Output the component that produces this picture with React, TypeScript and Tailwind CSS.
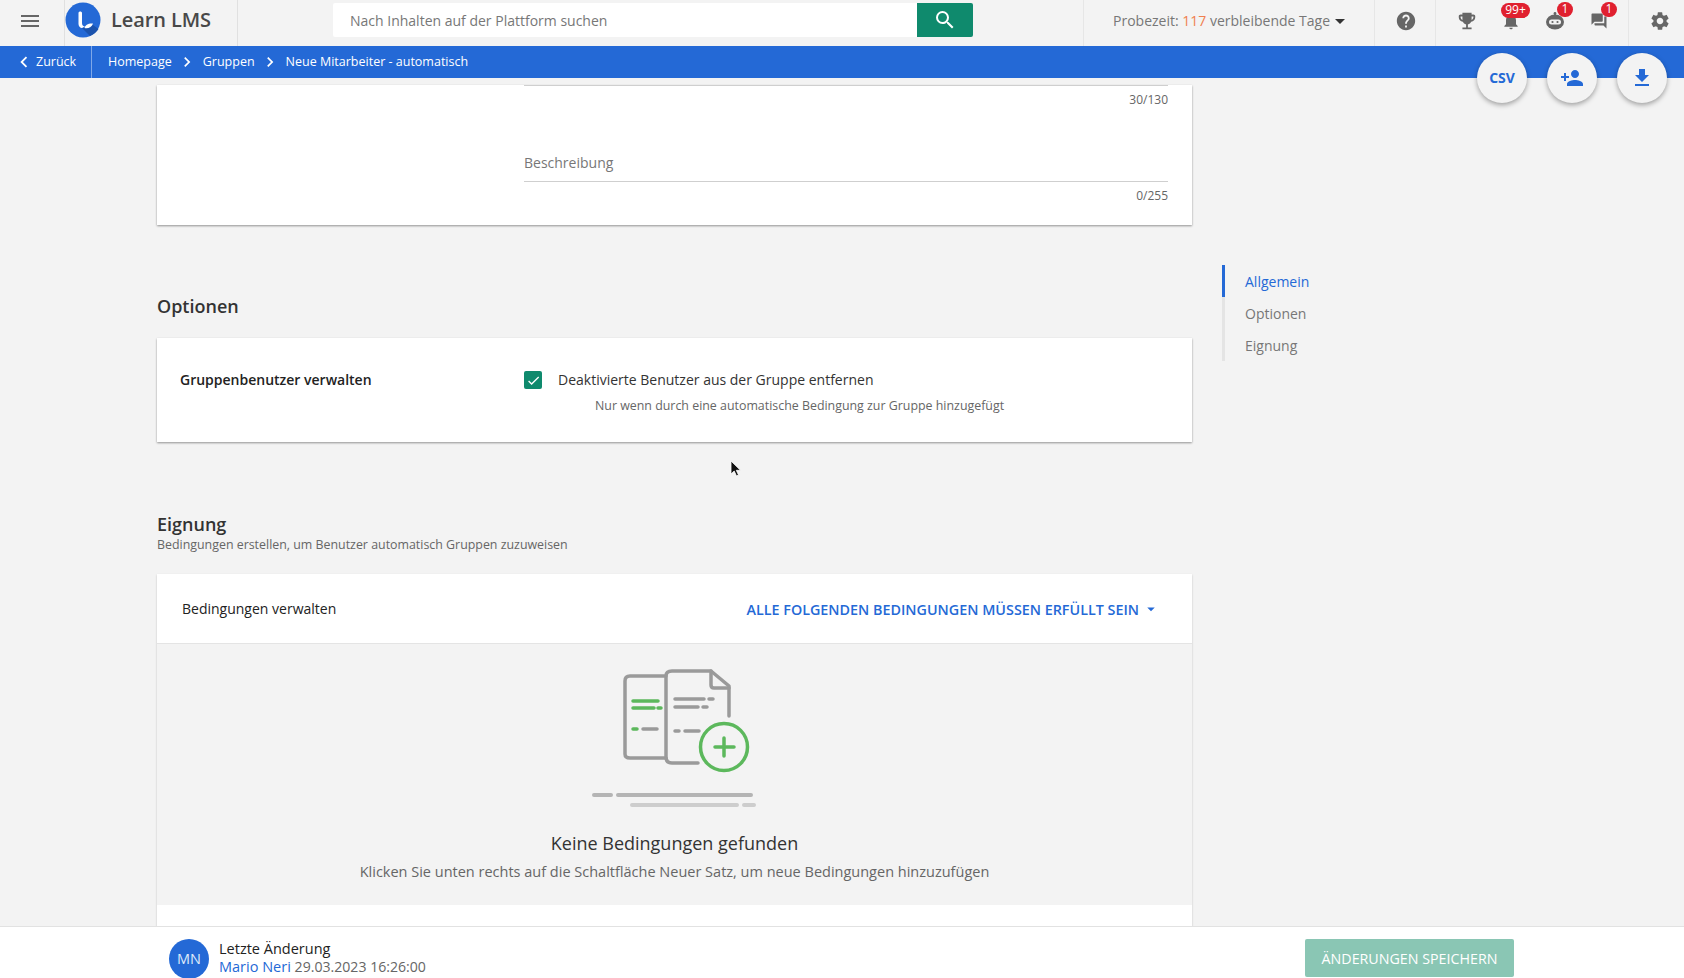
import { MdMenu, MdSearch, MdHelp, MdEmojiEvents, MdNotifications, MdQuestionAnswer, MdSettings, MdPersonAdd, MdFileDownload, MdChevronRight, MdChevronLeft, MdArrowDropDown, MdCheck } from "react-icons/md";

function Logo() {
  return (
    <svg width="36" height="36" viewBox="0 0 36 36" className="shrink-0">
      <circle cx="18" cy="18" r="17.5" fill="#2469d6" />
      <path d="M17 26 L28 23 L33.5 27 A17.5 17.5 0 0 1 25 34 Z" fill="#1b53ad" />
      <path d="M13.5 11 C13.5 9 17 9 17 11 V21 C17 23 18 24.5 20 24.5 L17 26 C15 26 13.5 24 13.5 22 Z" fill="#fff" />
      <path d="M19.5 26 C20 23 23.5 21 28 21.5 C27 25 23 27 19.5 26 Z" fill="#fff" />
    </svg>
  );
}

function RobotIcon() {
  return (
    <svg width="22" height="22" viewBox="0 0 22 22">
      <circle cx="11" cy="3.5" r="1.4" fill="#666" />
      <path d="M11 3.5v4" stroke="#666" strokeWidth="1.5" />
      <ellipse cx="11" cy="12" rx="9" ry="7.5" fill="#666" />
      <rect x="5" y="9.5" width="12" height="5" rx="2.5" fill="#f3f3f3" />
      <circle cx="8.5" cy="12" r="1.1" fill="#666" />
      <circle cx="13.5" cy="12" r="1.1" fill="#666" />
    </svg>
  );
}

function Badge({ children, className }: { children: string; className: string }) {
  return (
    <span className={`absolute -top-[8px] flex h-[15px] items-center justify-center rounded-full bg-[#e0202f] text-[12px] font-medium text-white ${className}`}>
      {children}
    </span>
  );
}

function EmptyIllustration() {
  return (
    <svg width="240" height="170" viewBox="0 0 240 170" fill="none" strokeLinecap="round" strokeLinejoin="round" className="ml-[11px] shrink-0">
      <path d="M106 25 H70 Q65 25 65 30 V103 Q65 107 70 107 H106" stroke="#9a9a9a" strokeWidth="3.5" />
      <path d="M138 112 H112 Q106 112 106 106 V25 Q106 20 112 20 H151 L169 35 V65" stroke="#9a9a9a" strokeWidth="3.5" />
      <path d="M151 20 V34 Q151 37 154 37 H169" stroke="#9a9a9a" strokeWidth="3.5" />
      <path d="M73 50 H98 M73 57 H94 M98 57 H101 M73 78 H77" stroke="#5cb85c" strokeWidth="3.5" />
      <path d="M83 78 H97 M115 48 H144 M149 48 H153 M115 56 H138 M143 56 H147 M115 80 H119 M125 80 H139" stroke="#9a9a9a" strokeWidth="3.5" />
      <circle cx="164" cy="96" r="23.5" stroke="#5cb85c" strokeWidth="3.5" />
      <path d="M164 87 V105 M155 96 H174" stroke="#5cb85c" strokeWidth="3.5" />
      <path d="M34 144 H51 M58 144 H191" stroke="#b4b4b4" strokeWidth="4" />
      <path d="M72 154 H177 M184 154 H194" stroke="#cdcdcd" strokeWidth="4" />
    </svg>
  );
}

function Fab({ children }: { children: React.ReactNode }) {
  return (
    <button className="flex h-[50px] w-[50px] items-center justify-center rounded-full bg-[#f3f3f3] text-[#2469d6] shadow-[0_2px_5px_rgba(0,0,0,0.35)]">
      {children}
    </button>
  );
}

export default function App() {
  return (
    <div className="relative flex h-[978px] w-[1684px] flex-col overflow-hidden bg-[#f3f3f3] font-['Open_Sans',sans-serif] text-[#222]">
      <header className="flex h-[46px] shrink-0 items-stretch bg-[#f3f3f3]">
        <div className="flex w-[64px] items-center justify-center pb-[5px] pr-1">
          <MdMenu size={24} className="text-[#666]" />
        </div>
        <div className="flex w-[174px] items-center gap-[10px] border-x border-[#e0e0e0] pb-[6px]">
          <Logo />
          <span className="text-[20px] font-semibold tracking-[-0.1px] text-[#484848]">Learn LMS</span>
        </div>
        <div className="ml-[95px] mt-[3px] flex h-[34px] w-[640px]">
          <div className="flex flex-1 items-center rounded-l-[2px] bg-white pl-[17px] text-[14px] text-[#777]">Nach Inhalten auf der Plattform suchen</div>
          <div className="flex w-[56px] items-center justify-center rounded-r-[2px] bg-[#0f8a6d]">
            <MdSearch size={24} className="text-white" />
          </div>
        </div>
        <div className="ml-[110px] flex w-[292px] items-center border-x border-[#e6e6e6] pb-[5px] pl-[29px] text-[14px] text-[#777]">
          Probezeit:&nbsp;<span className="text-[#f07f4f]">117</span>&nbsp;verbleibende Tage
          <MdArrowDropDown size={24} className="-ml-[2px] text-[#333]" />
        </div>
        <div className="flex w-[61px] items-center justify-center border-r border-[#e6e6e6] pb-[5px] pl-[2px]">
          <MdHelp size={22} className="text-[#666]" />
        </div>
        <div className="flex w-[193px] items-center justify-between border-r border-[#e6e6e6] pb-[5px] pl-[20px] pr-[18px]">
          <MdEmojiEvents size={22} className="text-[#666]" />
          <span className="relative flex w-[22px] justify-center">
            <MdNotifications size={20} className="text-[#666]" />
            <Badge className="left-[1px] w-[29px]">99+</Badge>
          </span>
          <span className="relative flex w-[22px] justify-center">
            <RobotIcon />
            <Badge className="left-[13px] w-[16px]">1</Badge>
          </span>
          <span className="relative flex h-[22px] w-[22px] items-center justify-center">
            <MdQuestionAnswer size={18} className="text-[#666]" />
            <Badge className="left-[13px] w-[16px]">1</Badge>
          </span>
        </div>
        <div className="flex flex-1 items-center justify-center pb-[5px] pl-[7px]">
          <MdSettings size={22} className="text-[#666]" />
        </div>
      </header>

      <nav className="flex h-[32px] shrink-0 items-stretch bg-[#2469d6] text-[12.5px] text-white">
        <div className="flex w-[92px] items-center border-r border-[#7fa8e8] pl-[13px] font-medium">
          <MdChevronLeft size={22} className="mr-[1px]" />
          Zurück
        </div>
        <div className="flex items-center pl-[16px] font-medium">
          <span>Homepage</span>
          <MdChevronRight size={20} className="mx-[5.5px]" />
          <span>Gruppen</span>
          <MdChevronRight size={20} className="mx-[5.5px]" />
          <span>Neue Mitarbeiter - automatisch</span>
        </div>
      </nav>

      <main className="flex min-h-0 flex-1 overflow-hidden pl-[157px]">
        <div className="w-[1035px] shrink-0">
          <section className="h-[140px] bg-white pl-[367px] pr-[24px] shadow-[0_1px_2px_rgba(0,0,0,0.4)]">
            <div className="mt-[7px] h-px bg-[#cfcfcf]" />
            <div className="mt-[6px] text-right text-[12px] leading-[16px] text-[#666]">30/130</div>
            <div className="mt-[45px] text-[14px] leading-[20px] text-[#777]">Beschreibung</div>
            <div className="mt-[8px] h-px bg-[#cfcfcf]" />
            <div className="mt-[6px] text-right text-[12px] leading-[16px] text-[#666]">0/255</div>
          </section>

          <h2 className="mt-[68px] text-[18px] font-semibold leading-[26px] text-[#333]">Optionen</h2>
          <section className="mt-[19px] flex h-[104px] bg-white pl-[23px] pt-[32px] shadow-[0_1px_2px_rgba(0,0,0,0.4)]">
            <div className="w-[344px] text-[14px] font-semibold leading-[20px] text-[#222]">Gruppenbenutzer verwalten</div>
            <div>
              <div className="flex items-center gap-[16px]">
                <span className="flex h-[18px] w-[18px] items-center justify-center rounded-[2px] bg-[#0f8a6d]">
                  <MdCheck size={15} className="text-white" />
                </span>
                <span className="text-[14px] leading-[20px] text-[#333]">Deaktivierte Benutzer aus der Gruppe entfernen</span>
              </div>
              <div className="mt-[8px] pl-[71px] text-[12.4px] leading-[16px] text-[#666]">Nur wenn durch eine automatische Bedingung zur Gruppe hinzugefügt</div>
            </div>
          </section>

          <h2 className="mt-[69px] text-[18px] font-semibold leading-[26px] text-[#333]">Eignung</h2>
          <p className="text-[12.4px] leading-[16px] text-[#666]">Bedingungen erstellen, um Benutzer automatisch Gruppen zuzuweisen</p>
          <section className="mt-[21px] bg-white shadow-[0_1px_2px_rgba(0,0,0,0.2)]">
            <div className="flex h-[70px] items-center justify-between border-b border-[#e4e4e4] pl-[25px] pr-[32px]">
              <span className="text-[14px] font-medium text-[#222]">Bedingungen verwalten</span>
              <span className="flex items-center pt-[2px] text-[14.33px] font-semibold text-[#2469d6]">
                ALLE FOLGENDEN BEDINGUNGEN MÜSSEN ERFÜLLT SEIN
                <MdArrowDropDown size={18} className="ml-[3px]" />
              </span>
            </div>
            <div className="flex h-[261px] flex-col items-center bg-[#f3f3f3] pt-[7px]">
              <EmptyIllustration />
              <div className="mt-[10px] text-[18px] leading-[24px] text-[#333]">Keine Bedingungen gefunden</div>
              <div className="mt-[7px] text-[14.5px] font-medium leading-[20px] text-[#666]">Klicken Sie unten rechts auf die Schaltfläche Neuer Satz, um neue Bedingungen hinzuzufügen</div>
            </div>
            <div className="h-[30px]" />
          </section>
        </div>

        <aside className="ml-[30px] mt-[187px] h-[96px] border-l-[3px] border-[#e4e4e4] text-[14px] text-[#777]">
          <div className="relative h-[32px] pl-[20px] leading-[34px] text-[#2469d6]">
            <span className="absolute -left-[3px] top-0 h-[32px] w-[3px] bg-[#2469d6]" />
            Allgemein
          </div>
          <div className="h-[32px] pl-[20px] leading-[34px]">Optionen</div>
          <div className="h-[32px] pl-[20px] leading-[34px]">Eignung</div>
        </aside>
      </main>

      <footer className="flex h-[52px] shrink-0 items-start justify-between border-t border-[#e2e2e2] bg-white pl-[169px] pr-[170px] pt-[12px]">
        <div className="flex gap-[10px]">
          <span className="flex h-[40px] w-[40px] items-center justify-center rounded-full bg-[#2469d6] text-[14.5px] text-[#dfe9fa]">MN</span>
          <div className="mt-[1px] text-[14.5px] leading-[18px]">
            <div className="text-[#222]">Letzte Änderung</div>
            <div className="text-[#666]"><span className="text-[#2469d6]">Mario Neri</span> <span className="text-[14.1px]">29.03.2023 16:26:00</span></div>
          </div>
        </div>
        <button className="h-[38px] w-[209px] rounded-[2px] bg-[#8ac6b4] pt-[1px] text-[14.25px] font-medium text-white">ÄNDERUNGEN SPEICHERN</button>
      </footer>

      <div className="absolute right-[17px] top-[53px] flex gap-[20px]">
        <Fab><span className="pb-[1px] text-[14px] font-bold">CSV</span></Fab>
        <Fab><MdPersonAdd size={24} /></Fab>
        <Fab><MdFileDownload size={24} /></Fab>
      </div>

      <svg width="12" height="18" viewBox="0 0 12 18" className="absolute left-[730px] top-[460px]">
        <path d="M1 1 V14 L4.2 11 L6.5 16 L8.5 15 L6.3 10.3 H10.5 Z" fill="#111" stroke="#fff" strokeWidth="0.8" />
      </svg>
    </div>
  );
}
